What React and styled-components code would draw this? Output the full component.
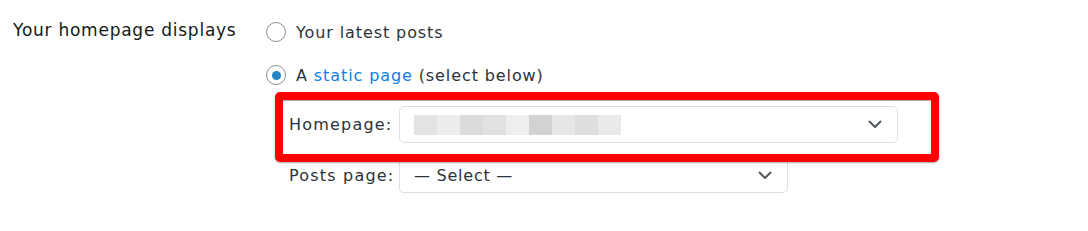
import React from "react";
import styled, { createGlobalStyle } from "styled-components";

const GlobalStyle = createGlobalStyle`
  html, body { margin: 0; padding: 0; background: #ffffff; }
  body { font-family: "DejaVu Sans", "Noto Sans", sans-serif; }
`;

const Page = styled.div`
  display: flex;
  align-items: flex-start;
  padding: 15px 0 0 13px;
  height: 231px;
  box-sizing: border-box;
`;

const Heading = styled.div`
  width: 253px;
  flex: none;
  margin-top: 3px;
  font-size: 17px;
  line-height: 24px;
  letter-spacing: 0.75px;
  color: #14191c;
`;

const Field = styled.div`
  display: flex;
  flex-direction: column;
  padding-top: 5px;
`;

const RadioRow = styled.label`
  display: flex;
  align-items: center;
  gap: 10px;
  height: 24px;
  margin-bottom: 19px;
  font-size: 16px;
  letter-spacing: 0.9px;
  color: #2c3338;
`;

const Radio = styled.span`
  width: 20px;
  height: 20px;
  box-sizing: border-box;
  border: 1px solid #8c8f94;
  border-radius: 50%;
  display: flex;
  align-items: center;
  justify-content: center;
  background: #fff;
  &::after {
    content: "";
    width: 9px;
    height: 9px;
    border-radius: 50%;
    background: ${(p) => (p.$checked ? "#2385c4" : "transparent")};
  }
`;

const Link = styled.a`
  color: #0a80e8;
  text-decoration: none;
`;

const SelectRow = styled.div`
  position: relative;
  display: flex;
  align-items: center;
  padding-left: 23px;
  margin-bottom: ${(p) => p.$gap || 0}px;
`;

const SelectLabel = styled.span`
  width: 110px;
  flex: none;
  font-size: 16px;
  letter-spacing: 1.2px;
  color: #2c3338;
`;

const Select = styled.div`
  width: ${(p) => p.$width}px;
  height: ${(p) => p.$height}px;
  box-sizing: border-box;
  border: 1px solid #dedfe1;
  border-radius: 5px;
  background: #fff;
  display: flex;
  align-items: center;
  justify-content: space-between;
  padding: 0 15px 0 14px;
  font-size: 16px;
  letter-spacing: 0.75px;
  color: #2c3338;
`;

const Redacted = styled.div`
  display: flex;
  height: 20px;
`;

const Block = styled.span`
  width: 23px;
  height: 20px;
  background: ${(p) => p.$c};
`;

const Highlight = styled.div`
  position: absolute;
  left: 9px;
  top: -14px;
  width: 664px;
  height: 70px;
  box-sizing: border-box;
  border: 8px solid #ff0000;
  border-radius: 5px;
  box-shadow: 0 1px 2px rgba(0, 0, 0, 0.35), inset 0 1px 1px rgba(0, 0, 0, 0.35);
  pointer-events: none;
  z-index: 2;
`;

const Chevron = () => (
  <svg width="14" height="9" viewBox="0 0 14 9" fill="none">
    <polyline points="1.5,1.5 7,7 12.5,1.5" stroke="#50575e" strokeWidth="2" strokeLinecap="round" strokeLinejoin="round" />
  </svg>
);

const blocks = ["#e3e3e3", "#ededed", "#dbdbdb", "#e1e1e1", "#eeeeee", "#d2d2d2", "#e7e7e7", "#dedede", "#eaeaea"];

export default function App() {
  return (
    <>
      <GlobalStyle />
      <Page>
        <Heading>Your homepage displays</Heading>
        <Field>
          <RadioRow>
            <Radio />
            <span>Your latest posts</span>
          </RadioRow>
          <RadioRow>
            <Radio $checked />
            <span>
              A <Link href="#">static page</Link> (select below)
            </span>
          </RadioRow>
          <SelectRow $gap={14}>
            <SelectLabel>Homepage:</SelectLabel>
            <Select $width={499} $height={37}>
              <Redacted>
                {blocks.map((c, i) => (
                  <Block key={i} $c={c} />
                ))}
              </Redacted>
              <Chevron />
            </Select>
            <Highlight />
          </SelectRow>
          <SelectRow>
            <SelectLabel>Posts page:</SelectLabel>
            <Select $width={389} $height={36}>
              <span>— Select —</span>
              <Chevron />
            </Select>
          </SelectRow>
        </Field>
      </Page>
    </>
  );
}
